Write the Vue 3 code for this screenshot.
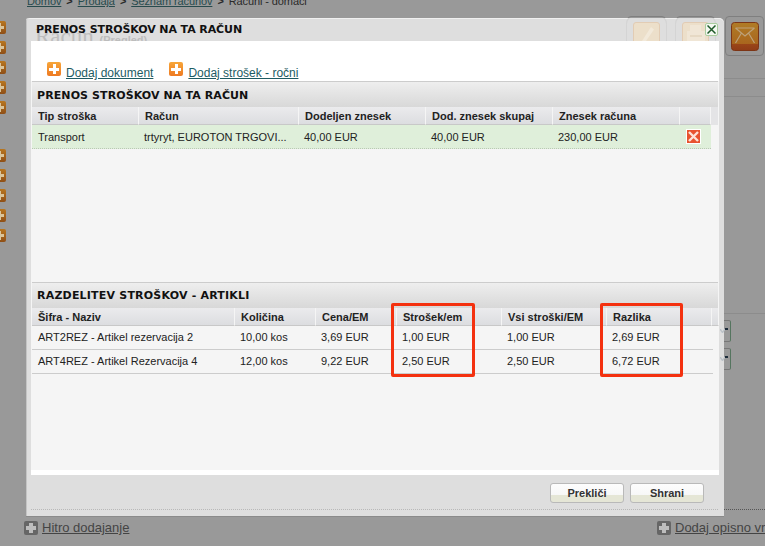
<script setup>
const sideTop = [1, 2, 3, 4, 5];
const sideBottom = [1, 2, 3, 4, 5];

const costCols = ['Tip stroška', 'Račun', 'Dodeljen znesek', 'Dod. znesek skupaj', 'Znesek računa', ''];
const costRow = ['Transport', 'trtyryt, EUROTON TRGOVI...', '40,00 EUR', '40,00 EUR', '230,00 EUR'];

const itemCols = ['Šifra - Naziv', 'Količina', 'Cena/EM', 'Strošek/em', 'Vsi stroški/EM', 'Razlika', ''];
const itemRows = [
  ['ART2REZ - Artikel rezervacija 2', '10,00 kos', '3,69 EUR', '1,00 EUR', '1,00 EUR', '2,69 EUR'],
  ['ART4REZ - Artikel Rezervacija 4', '12,00 kos', '9,22 EUR', '2,50 EUR', '2,50 EUR', '6,72 EUR'],
];
</script>

<template>
  <div class="page">
    <!-- page behind the dialog, dimmed -->
    <div class="crumbs">
      <a>Domov</a><span>&gt;</span><a>Prodaja</a><span>&gt;</span><a>Seznam računov</a><span>&gt;</span><b>Računi - domači</b>
    </div>
    <div class="side side-a"><i v-for="n in sideTop" :key="n"></i></div>
    <div class="side side-b"><i v-for="n in sideBottom" :key="n"></i></div>

    <div class="tool tool-a"></div>
    <div class="tool tool-b"></div>
    <div class="tool tool-c">
      <svg width="28" height="29" viewBox="0 0 28 29">
        <defs>
          <linearGradient id="mailBg" x1="0" y1="0" x2="0" y2="1">
            <stop offset="0" stop-color="#b07c26" />
            <stop offset="0.76" stop-color="#a9661e" />
            <stop offset="0.77" stop-color="#9a4518" />
            <stop offset="1" stop-color="#8f3c17" />
          </linearGradient>
        </defs>
        <rect x="0.5" y="0.5" width="27" height="28" rx="3" fill="url(#mailBg)" stroke="#7c3516" />
        <path d="M4.5 6 L14 14 L23.5 6 M4.5 6 H23.5 M4.5 21 L10.5 11 M23.5 21 L17.5 11" fill="none" stroke="#bda27a" stroke-width="1.2" />
      </svg>
    </div>
    <div class="rule rule-a"></div>
    <div class="rule rule-b"></div>
    <div class="rule rule-c"></div>
    <div class="drop drop-a"></div>
    <div class="drop drop-b"></div>
    <div class="rule-dots"></div>

    <div class="bottom-link link-a"><span class="grey-plus"></span><a>Hitro dodajanje</a></div>
    <div class="bottom-link link-b"><span class="grey-plus"></span><a>Dodaj opisno vrstico</a></div>

    <!-- dialog -->
    <div class="modal">
      <div class="modal-head">
        <span class="ghost-title">Račun <small>(Pregled)</small></span>
        <h1>PRENOS STROŠKOV NA TA RAČUN</h1>
        <span class="ghost-btn ghost-a">
          <svg width="25" height="18" viewBox="0 0 25 18">
            <path d="M8 18 L17 4 L20 6.5 L12 18 Z" fill="#f2e9da" />
          </svg>
        </span>
        <span class="ghost-btn ghost-b">
          <svg width="25" height="18" viewBox="0 0 25 18">
            <path d="M7 2 H18 V8 H22 V18 H4 V8 H7 Z" fill="#f0e6d6" />
            <path d="M7 12 H19 V14 H7 Z" fill="#e6d9c4" />
          </svg>
        </span>
        <button class="close">
          <svg width="9" height="9" viewBox="0 0 9 9"><path d="M0.5 0.5 L8.5 8.5 M8.5 0.5 L0.5 8.5" stroke="#1f5a2a" stroke-width="1.5" /></svg>
        </button>
      </div>

      <div class="modal-body">
        <div class="actions">
          <span class="action">
            <span class="plus"></span><a>Dodaj dokument</a>
          </span>
          <span class="action">
            <span class="plus"></span><a>Dodaj strošek - ročni</a>
          </span>
        </div>

        <div class="panel">
          <div class="section">
            <h2>PRENOS STROŠKOV NA TA RAČUN</h2>
            <div class="thead cost-grid">
              <div v-for="c in costCols" :key="c" class="th">{{ c }}</div>
            </div>
            <div class="tr cost-grid green">
              <div v-for="c in costRow" :key="c" class="td">{{ c }}</div>
              <div class="td del-cell">
                <span class="del">
                  <svg width="11" height="11" viewBox="0 0 11 11"><path d="M1 1 L10 10 M10 1 L1 10" stroke="#fde3d6" stroke-width="2.4" /></svg>
                </span>
              </div>
            </div>
          </div>

          <div class="section second">
            <h2>RAZDELITEV STROŠKOV - ARTIKLI</h2>
            <div class="thead item-grid">
              <div v-for="c in itemCols" :key="c" class="th">{{ c }}</div>
            </div>
            <div v-for="row in itemRows" :key="row[0]" class="tr item-grid line">
              <div v-for="c in row" :key="c" class="td">{{ c }}</div>
            </div>
          </div>
        </div>
      </div>

      <div class="modal-foot">
        <button class="btn">Prekliči</button>
        <button class="btn">Shrani</button>
      </div>

      <svg class="chev chev-a" width="5" height="4" viewBox="0 0 5 4"><path d="M0 0 L2.5 3.5 L5 0" fill="none" stroke="#bcc2c8" stroke-width="1.4" /></svg>
      <svg class="chev chev-b" width="5" height="4" viewBox="0 0 5 4"><path d="M0 0 L2.5 3.5 L5 0" fill="none" stroke="#bcc2c8" stroke-width="1.4" /></svg>

      <div class="red red-a"></div>
      <div class="red red-b"></div>
    </div>
  </div>
</template>

<style>
html, body { margin: 0; background: #999; }
</style>

<style scoped>
.page {
  position: relative;
  width: 765px;
  height: 546px;
  overflow: hidden;
  background: #999;
  font-family: "Liberation Sans", Arial, sans-serif;
  font-size: 11px;
  color: #222;
}

.crumbs {
  position: absolute;
  left: 27px;
  top: -6px;
  display: flex;
  gap: 5px;
  font-size: 11px;
  line-height: 14px;
  letter-spacing: -0.1px;
  color: #2a2a2a;
  white-space: nowrap;
}
.crumbs a { color: #274b4d; text-decoration: underline; }
.crumbs span { font-weight: bold; }
.crumbs b { font-weight: normal; }

.side {
  position: absolute;
  left: -7px;
  display: flex;
  flex-direction: column;
  gap: 7px;
}
.side-a { top: 21px; }
.side-b { top: 149px; }
.side i {
  display: block;
  width: 13px;
  height: 13px;
  border-radius: 2px;
  background:
    linear-gradient(#d9c49a, #d9c49a) center / 9px 3px no-repeat,
    linear-gradient(#d9c49a, #d9c49a) center / 3px 9px no-repeat,
    linear-gradient(#b8761f, #8f4f16);
}

.tool {
  position: absolute;
  top: 16px;
  width: 39px;
  height: 40px;
  box-sizing: border-box;
  border: 1px solid #7f7f7f;
  border-radius: 4px;
  display: flex;
  align-items: center;
  justify-content: center;
}
.tool-a { left: 627px; }
.tool-b { left: 676px; }
.tool-c { left: 725px; }

.rule {
  position: absolute;
  left: 724px;
  right: 0;
  height: 1px;
  background: #8c8c8c;
}
.rule-a { top: 78px; }
.rule-b { top: 96px; }
.rule-c { top: 313px; }

.drop {
  position: absolute;
  left: 724px;
  width: 7px;
  height: 22px;
  box-sizing: border-box;
  border: 1px solid #777;
  border-right-color: #55755f;
  border-left: none;
  border-radius: 0 2px 2px 0;
}
.drop::before {
  content: "";
  position: absolute;
  left: 1px;
  top: 7px;
  width: 3px;
  height: 2px;
  background: #1d2c3a;
}
.drop-a { top: 320px; }
.drop-b { top: 348px; }

.rule-dots {
  position: absolute;
  left: 724px;
  right: 0;
  top: 509px;
  border-top: 1px dotted #555;
}

.bottom-link {
  position: absolute;
  top: 520px;
  display: flex;
  align-items: center;
  gap: 4px;
  font-size: 13px;
  line-height: 15px;
  white-space: nowrap;
}
.bottom-link a { color: #444; text-decoration: underline; }
.link-a { left: 24px; }
.link-b { left: 657px; }
.grey-plus {
  width: 14px;
  height: 14px;
  border-radius: 2px;
  background:
    linear-gradient(#bdbdbd, #bdbdbd) center / 10px 4px no-repeat,
    linear-gradient(#bdbdbd, #bdbdbd) center / 4px 10px no-repeat,
    #666;
}

.modal {
  position: absolute;
  left: 26px;
  top: 18px;
  width: 698px;
  height: 498px;
  box-sizing: border-box;
  padding: 0 5px;
  display: flex;
  flex-direction: column;
  background: #dedede;
  border-radius: 3px 5px 0 0;
  box-shadow: inset 1px 0 0 #c4c4c4, inset 0 1px 0 #f0f0f0, 0 1px 0 #8a8a8a;
}

.modal-head {
  position: relative;
  height: 23px;
  flex: none;
  overflow: hidden;
}
.modal-head h1 {
  position: relative;
  margin: 0;
  padding: 5px 0 0 5px;
  font-family: "DejaVu Sans", Verdana, sans-serif;
  font-size: 11px;
  line-height: 13px;
  font-weight: bold;
  letter-spacing: -0.1px;
  color: #111;
  white-space: nowrap;
}
.ghost-title {
  position: absolute;
  left: 4px;
  top: 7px;
  font-family: "Liberation Serif", serif;
  font-size: 23px;
  line-height: 23px;
  color: #bdbdbd;
  white-space: nowrap;
}
.ghost-title small {
  font-family: "Liberation Sans", sans-serif;
  font-size: 11px;
  font-weight: bold;
}
.ghost-btn {
  position: absolute;
  top: 4px;
  width: 27px;
  height: 28px;
  box-sizing: border-box;
  border-radius: 3px;
  border: 1px solid #e2ccb4;
  background: #ecdfca;
  box-shadow: 0 0 0 6px #dedede, 0 0 0 7px #d4d4d4;
}
.ghost-a { left: 602px; }
.ghost-b { left: 651px; }
.close {
  position: absolute;
  right: 1px;
  top: 5px;
  width: 13px;
  height: 13px;
  padding: 0;
  display: flex;
  align-items: center;
  justify-content: center;
  background: #f4f8f1;
  border: 1px solid #a9cd9f;
  border-radius: 2px;
}

.modal-body {
  flex: 1;
  display: flex;
  flex-direction: column;
  background: #fff;
  padding-bottom: 5px;
  min-height: 0;
}

.actions {
  height: 40px;
  flex: none;
  box-sizing: border-box;
  padding: 21px 0 0 16px;
  display: flex;
  gap: 16px;
}
.action {
  display: flex;
  gap: 5px;
  font-size: 12px;
  line-height: 14px;
}
.action a {
  margin-top: 4px;
  color: #1d5c63;
  text-decoration: underline;
  white-space: nowrap;
}
.plus {
  width: 14px;
  height: 14px;
  border-radius: 2px;
  background:
    linear-gradient(#fff, #fff) center / 10px 3px no-repeat,
    linear-gradient(#fff, #fff) center / 3px 10px no-repeat,
    linear-gradient(#f7a63a, #ee7a22);
}

.panel {
  flex: 1;
  background: #f5f5f5;
  display: flex;
  flex-direction: column;
}
.section { margin: 0 1px 0 1px; }
.section.second { margin-top: 133px; }
.section h2 {
  margin: 0;
  height: 26px;
  box-sizing: border-box;
  padding: 7px 0 0 5px;
  border-top: 1px solid #ccc;
  background: linear-gradient(#eeeeee, #d8d8d8);
  font-family: "DejaVu Sans", Verdana, sans-serif;
  font-size: 11px;
  line-height: 13px;
  font-weight: bold;
  letter-spacing: 0.1px;
  color: #111;
  white-space: nowrap;
}
.section.second h2 { padding-top: 6px; letter-spacing: 0.2px; }

.cost-grid {
  display: grid;
  grid-template-columns: 107px 160px 127px 127px 127px 31px;
}
.item-grid {
  display: grid;
  grid-template-columns: 203px 81px 81px 105px 105px 105px 6px;
}

.thead {
  height: 18px;
  background: #e4e4e6;
}
.th {
  box-sizing: border-box;
  height: 18px;
  padding: 2px 0 0 6px;
  line-height: 14px;
  font-weight: bold;
  color: #222;
  background: linear-gradient(#ebebed, #dcdde0);
  border-right: 1px solid #f5f5f5;
  border-bottom: 1px solid #c8c8c8;
  white-space: nowrap;
}

.tr { height: 24px; align-items: center; }
.td {
  padding-left: 5px;
  line-height: 14px;
  color: #222;
  white-space: nowrap;
}
.td:first-child { padding-left: 6px; }
.green {
  width: 679px;
  background: #dfefda;
  border-bottom: 1px dotted #b9c9b4;
  box-sizing: border-box;
}
.line {
  width: 681px;
  box-sizing: border-box;
  padding-bottom: 2px;
  border-bottom: 1px solid #ccc;
}
.del-cell { padding-left: 6px; display: flex; }
.del {
  width: 15px;
  height: 15px;
  box-sizing: border-box;
  border: 1px solid #fff;
  background: #e8532e;
  display: flex;
  align-items: center;
  justify-content: center;
}

.modal-foot {
  height: 41px;
  flex: none;
  box-sizing: border-box;
  padding: 8px 15px 0 0;
  display: flex;
  justify-content: flex-end;
  gap: 6px;
  background-image: linear-gradient(to right, #b8b8b8 1px, transparent 1px);
  background-size: 2px 1px;
  background-repeat: repeat-x;
  background-position: 0 34px;
}
.btn {
  width: 74px;
  height: 20px;
  padding: 0;
  border: 1px solid #b9b9b9;
  border-radius: 3px;
  background: linear-gradient(#fdfdfd 0, #f7f7f7 60%, #e5e6d6 60%, #e5e6d6 100%);
  font-family: "Liberation Sans", Arial, sans-serif;
  font-size: 11px;
  font-weight: bold;
  color: #333;
}

.chev { position: absolute; left: 694px; }
.chev-a { top: 311px; }
.chev-b { top: 339px; }

.red {
  position: absolute;
  top: 285px;
  height: 74px;
  box-sizing: border-box;
  border: 3px solid #f4310f;
  border-radius: 2px;
}
.red-a { left: 365px; width: 84px; }
.red-b { left: 574px; width: 83px; }
</style>
